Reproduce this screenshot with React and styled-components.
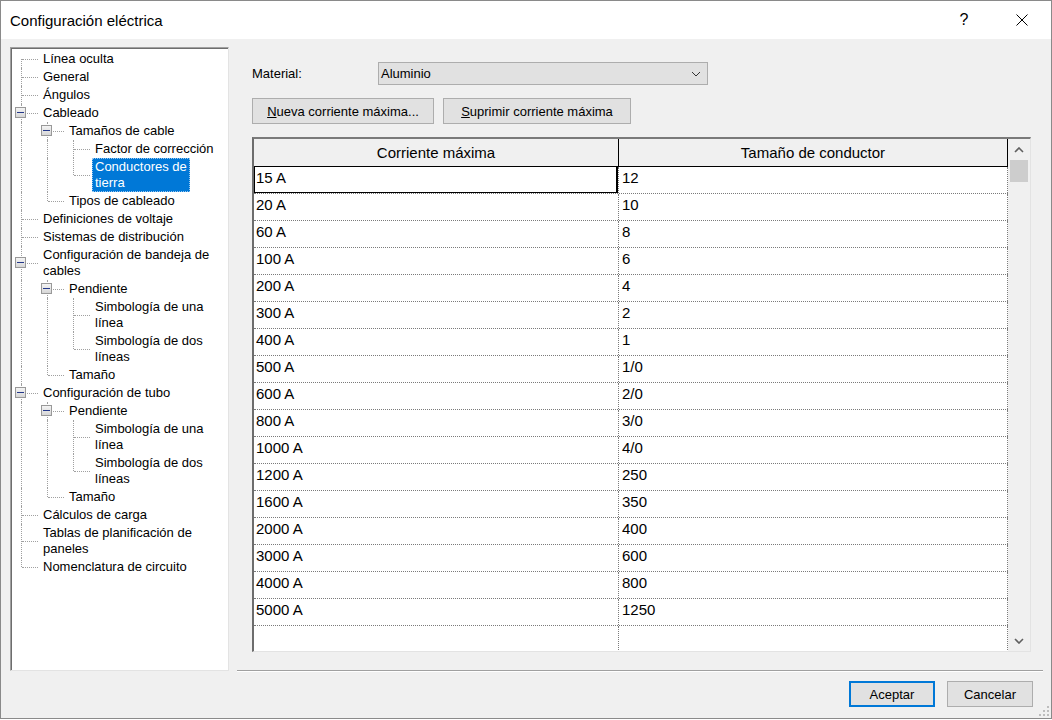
import React from 'react';
import styled, { createGlobalStyle } from 'styled-components';

const GlobalStyle = createGlobalStyle`
  html, body {
    margin: 0;
    padding: 0;
    background: #ffffff;
  }

  body {
    font-family: "Liberation Sans", Arial, sans-serif;
    font-size: 13px;
    color: #000;
  }

  * {
    box-sizing: border-box;
  }
`;

const Window = styled.div`
  position: relative;
  width: 1052px;
  height: 719px;
  border: 1px solid #8a8a8a;
  background: #f0f0f0;
  display: flex;
  flex-direction: column;
  overflow: hidden;
`;

const TitleBar = styled.div`
  height: 38px;
  flex: 0 0 38px;
  background: #fff;
  display: flex;
  align-items: center;
  padding-left: 9px;
`;

const Title = styled.div`
  flex: 1;
  font-size: 15px;
  padding-top: 1px;
`;

const TitleButton = styled.div`
  width: 46px;
  height: 38px;
  display: flex;
  align-items: center;
  justify-content: center;
  font-size: 16px;
  margin-right: ${({ $gap }) => $gap}px;
`;

const Main = styled.div`
  display: flex;
  padding: 8px 0 0 9px;
`;

const Tree = styled.div`
  width: 219px;
  height: 624px;
  flex: 0 0 219px;
  background: #fff;
  border-top: 1px solid #a0a0a0;
  border-left: 1px solid #a0a0a0;
  border-right: 1px solid #e3e3e3;
  border-bottom: 1px solid #e3e3e3;
  box-shadow: inset 1px 1px 0 #6d6d6d;
  padding-top: 2px;
`;

const TreeRow = styled.div`
  display: flex;
  align-items: stretch;
  font-size: 13px;
`;

const Guide = styled.span`
  position: relative;
  flex: 0 0 26px;

  &::before {
    content: '';
    position: absolute;
    left: 10px;
    top: 0;
    bottom: 0;
    border-left: 1px dotted ${({ $on }) => ($on ? '#a0a0a0' : 'transparent')};
  }
`;

const Elbow = styled.span`
  position: relative;
  flex: 0 0 26px;

  &::before {
    content: '';
    position: absolute;
    left: 10px;
    top: ${({ $first }) => ($first ? '50%' : '0')};
    bottom: ${({ $last }) => ($last ? '50%' : '0')};
    border-left: 1px dotted #a0a0a0;
  }

  &::after {
    content: '';
    position: absolute;
    left: 11px;
    width: 16px;
    top: 50%;
    border-top: 1px dotted #a0a0a0;
  }
`;

const Expander = styled.span`
  position: absolute;
  z-index: 1;
  left: 4px;
  top: 50%;
  width: 11px;
  height: 11px;
  margin-top: -6px;
  border: 1px solid #999;
  background: linear-gradient(#f4f4f4, #d6d6d6);

  &::after {
    content: '';
    position: absolute;
    left: 1px;
    width: 7px;
    top: 4px;
    border-top: 1px solid #24388a;
  }
`;

const Label = styled.span`
  display: flex;
  flex-direction: column;
  margin-left: 3px;
  padding: 1px 3px;
  line-height: 16px;
  white-space: nowrap;
  background: ${({ $selected }) => ($selected ? '#0078d7' : 'transparent')};
  color: ${({ $selected }) => ($selected ? '#fff' : '#000')};
  outline: ${({ $selected }) => ($selected ? '1px dotted #9cc8ee' : 'none')};
  outline-offset: -1px;
`;

const RightPane = styled.div`
  flex: 1;
  height: 624px;
  margin: 0 8px 0 8px;
  padding: 15px 12px 0 15px;
  border-bottom: 1px solid #a0a0a0;
  box-shadow: 0 1px 0 #fff;
  display: flex;
  flex-direction: column;
`;

const FieldRow = styled.div`
  display: flex;
  align-items: center;
  height: 23px;
`;

const FieldLabel = styled.span`
  width: 126px;
  font-size: 13px;
`;

const Select = styled.div`
  width: 330px;
  height: 23px;
  border: 1px solid #adadad;
  background: #e1e1e1;
  display: flex;
  align-items: center;
  justify-content: space-between;
  padding: 0 6px 0 2px;
  font-size: 13px;
`;

const ButtonRow = styled.div`
  display: flex;
  gap: 9px;
  margin-top: 13px;
`;

const Button = styled.div`
  width: ${({ $w }) => $w}px;
  height: 26px;
  display: flex;
  align-items: center;
  justify-content: center;
  background: #e1e1e1;
  border: ${({ $primary }) => ($primary ? '2px solid #0078d7' : '1px solid #adadad')};
  font-size: 13px;
`;

const Table = styled.div`
  display: flex;
  width: 779px;
  height: 515px;
  margin-top: 13px;
  background: #fff;
  border-top: 2px solid #7a7a7a;
  border-left: 2px solid #6d6d6d;
  border-right: 1px solid #e3e3e3;
  border-bottom: 1px solid #e3e3e3;
`;

const Grid = styled.div`
  flex: 1;
  display: flex;
  flex-direction: column;
  overflow: hidden;
`;

const HeadRow = styled.div`
  display: grid;
  grid-template-columns: 365px 389px;
  flex: 0 0 28px;
  background: #f0f0f0;
  border-bottom: 1px solid #000;
`;

const HeadCell = styled.div`
  display: flex;
  align-items: center;
  justify-content: center;
  border-right: 1px solid #000;
  font-size: 15px;
`;

const BodyRow = styled.div`
  display: grid;
  grid-template-columns: 365px 389px;
  flex: 0 0 27px;
  border-bottom: 1px dotted #7a7a7a;
`;

const Cell = styled.div`
  display: flex;
  align-items: center;
  padding: 0 0 5px ${({ $pad }) => $pad}px;
  border-right: 1px dotted #7a7a7a;
  font-size: 15px;
  box-shadow: ${({ $focus }) =>
    $focus ? 'inset 1px 0 0 #000, inset -2px 0 0 #000, inset 0 -1px 0 #000' : 'none'};
`;

const Scrollbar = styled.div`
  flex: 0 0 22px;
  background: #f0f0f0;
  display: flex;
  flex-direction: column;
`;

const ScrollArrow = styled.div`
  flex: 0 0 21px;
  display: flex;
  align-items: center;
  justify-content: center;
`;

const Thumb = styled.div`
  flex: 0 0 22px;
  margin: 0 2px;
  background: #cdcdcd;
`;

const Track = styled.div`
  flex: 1;
`;

const Footer = styled.div`
  display: flex;
  justify-content: flex-end;
  gap: 12px;
  padding: 10px 18px 0 0;
`;

const Grip = styled.svg`
  position: absolute;
  right: 1px;
  bottom: 1px;
`;

const TREE = [
  { label: ['Línea oculta'] },
  { label: ['General'] },
  { label: ['Ángulos'] },
  {
    label: ['Cableado'],
    children: [
      {
        label: ['Tamaños de cable'],
        children: [
          { label: ['Factor de corrección'] },
          { label: ['Conductores de', 'tierra'], selected: true },
        ],
      },
      { label: ['Tipos de cableado'] },
    ],
  },
  { label: ['Definiciones de voltaje'] },
  { label: ['Sistemas de distribución'] },
  {
    label: ['Configuración de bandeja de', 'cables'],
    children: [
      {
        label: ['Pendiente'],
        children: [
          { label: ['Simbología de una', 'línea'] },
          { label: ['Simbología de dos', 'líneas'] },
        ],
      },
      { label: ['Tamaño'] },
    ],
  },
  {
    label: ['Configuración de tubo'],
    children: [
      {
        label: ['Pendiente'],
        children: [
          { label: ['Simbología de una', 'línea'] },
          { label: ['Simbología de dos', 'líneas'] },
        ],
      },
      { label: ['Tamaño'] },
    ],
  },
  { label: ['Cálculos de carga'] },
  { label: ['Tablas de planificación de', 'paneles'] },
  { label: ['Nomenclatura de circuito'] },
];

const flatten = (nodes, level = 0, guides = [], out = []) => {
  nodes.forEach((node, i) => {
    const last = i === nodes.length - 1;
    out.push({ ...node, guides, last, firstRoot: level === 0 && i === 0 });
    if (node.children) flatten(node.children, level + 1, [...guides, !last], out);
  });
  return out;
};

const ROWS = [
  ['15 A', '12'],
  ['20 A', '10'],
  ['60 A', '8'],
  ['100 A', '6'],
  ['200 A', '4'],
  ['300 A', '2'],
  ['400 A', '1'],
  ['500 A', '1/0'],
  ['600 A', '2/0'],
  ['800 A', '3/0'],
  ['1000 A', '4/0'],
  ['1200 A', '250'],
  ['1600 A', '350'],
  ['2000 A', '400'],
  ['3000 A', '600'],
  ['4000 A', '800'],
  ['5000 A', '1250'],
  ['', ''],
];

const Chevron = ({ up, color = '#606060', width = 1.6 }) => (
  <svg width="10" height="6" viewBox="0 0 10 6">
    <polyline
      points={up ? '1,5 5,1 9,5' : '1,1 5,5 9,1'}
      fill="none"
      stroke={color}
      strokeWidth={width}
    />
  </svg>
);

export default function App() {
  const treeRows = flatten(TREE);

  return (
    <>
      <GlobalStyle />
      <Window>
        <TitleBar>
          <Title>Configuración eléctrica</Title>
          <TitleButton $gap={12}>?</TitleButton>
          <TitleButton $gap={6}>
            <svg width="12" height="12" viewBox="0 0 12 12">
              <path d="M0.5 0.5 L11.5 11.5 M11.5 0.5 L0.5 11.5" stroke="#000" strokeWidth="1" />
            </svg>
          </TitleButton>
        </TitleBar>

        <Main>
          <Tree>
            {treeRows.map((row, i) => (
              <TreeRow key={i}>
                {row.guides.map((on, g) => (
                  <Guide key={g} $on={on} />
                ))}
                <Elbow $last={row.last} $first={row.firstRoot}>
                  {row.children && <Expander />}
                </Elbow>
                <Label $selected={row.selected}>
                  {row.label.map((line, j) => (
                    <span key={j}>{line}</span>
                  ))}
                </Label>
              </TreeRow>
            ))}
          </Tree>

          <RightPane>
            <FieldRow>
              <FieldLabel>Material:</FieldLabel>
              <Select>
                <span>Aluminio</span>
                <Chevron color="#333" width={1} />
              </Select>
            </FieldRow>

            <ButtonRow>
              <Button $w={182}>
                <span><u>N</u>ueva corriente máxima...</span>
              </Button>
              <Button $w={188}>
                <span><u>S</u>uprimir corriente máxima</span>
              </Button>
            </ButtonRow>

            <Table>
              <Grid>
                <HeadRow>
                  <HeadCell>Corriente máxima</HeadCell>
                  <HeadCell>Tamaño de conductor</HeadCell>
                </HeadRow>
                {ROWS.map(([amps, size], i) => (
                  <BodyRow key={i}>
                    <Cell $pad={2} $focus={i === 0}>{amps}</Cell>
                    <Cell $pad={3}>{size}</Cell>
                  </BodyRow>
                ))}
              </Grid>
              <Scrollbar>
                <ScrollArrow>
                  <Chevron up />
                </ScrollArrow>
                <Thumb />
                <Track />
                <ScrollArrow>
                  <Chevron />
                </ScrollArrow>
              </Scrollbar>
            </Table>
          </RightPane>
        </Main>

        <Footer>
          <Button $w={86} $primary>Aceptar</Button>
          <Button $w={86}>Cancelar</Button>
        </Footer>

        <Grip width="12" height="12" viewBox="0 0 12 12">
          {[[9, 1], [9, 5], [5, 5], [9, 9], [5, 9], [1, 9]].map(([x, y]) => (
            <rect key={`${x}-${y}`} x={x} y={y} width="2" height="2" fill="#bdbdbd" />
          ))}
        </Grip>
      </Window>
    </>
  );
}
